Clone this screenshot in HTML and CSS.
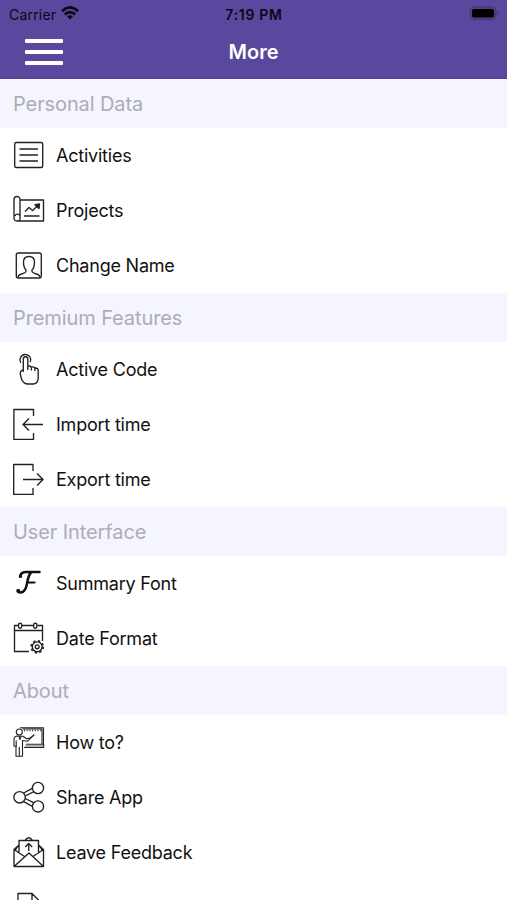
FILE: index.html
```html
<!DOCTYPE html>
<html lang="en">
<head>
<meta charset="utf-8">
<title>More</title>
<link rel="stylesheet" href="styles.css">
</head>
<body>
<header class="top">
  <div class="status">
    <div class="carrier"><span>Carrier</span>
      <svg width="18" height="14" viewBox="0 0 18 14" fill="none" stroke="#090713" stroke-width="2.7"><path d="M.9 5.2Q9-2.4 17.1 5.2M3.8 8.4Q9 3.7 14.2 8.4"/><path d="M6.1 10.6Q9 8 11.9 10.6L9 13.6Z" fill="#090713" stroke="none"/></svg>
    </div>
    <div class="time">7:19 PM</div>
    <svg class="battery" width="31" height="15" viewBox="0 0 31 15"><rect x="1" y="1" width="26" height="12.5" rx="4" fill="#50418b" stroke="#43366f"/><rect x="3" y="3" width="22" height="8.6" rx="2" fill="#000"/><path d="M29 5.500q2 1.700 0 3.500Z" fill="#392d64"/></svg>
  </div>
  <div class="nav">
    <button class="menu" aria-label="Menu"><i></i><i></i><i></i></button>
    <h1>More</h1>
  </div>
</header>
<main>
  <h2>Personal Data</h2>
  <ul>
    <li><svg viewBox="0 0 32 32"><rect x="1.700" y="3.500" width="28" height="25" rx="1.500"/><path d="M6.500 10h18.500M6.500 16h18.500M6.500 22h18.500"/></svg><span>Activities</span></li>
    <li><svg viewBox="0 0 32 32"><path d="M7 6h23.500v21H4M7 23V5.500a3 3 0 0 0-6 0V24.500a3 3 0 0 0 3 2.500h1.500Q7 27 7 24V22a2.600 2.600 0 0 0-5 0"/><path d="M12 17.500l4-4 3.500 3 6-5.500M11 22h15.500"/><path d="M22 10.700l4.500-.7-.5 4.500Z" fill="#222"/></svg><span>Projects</span></li>
    <li><svg viewBox="0 0 32 32"><rect x="3.300" y="4" width="25" height="25" rx="2"/><path d="M5 28Q5.500 25.500 10 24.500Q13.500 23.500 13 21Q10.500 18.500 10.500 13Q10.500 7.500 16 7.500T21.500 13Q21.500 18.500 19 21Q18.500 23.500 22 24.500Q26.500 25.500 27 28"/></svg><span>Change Name</span></li>
  </ul>
  <h2>Premium Features</h2>
  <ul>
    <li><svg viewBox="0 0 32 32"><path d="M7.800 9.800A5.400 5.400 0 1 1 17.300 9"/><path d="M10.300 19V6a2.200 2.200 0 0 1 4.500 0v7.500q2-1.200 3.600.700q2-1 3.500.800q3-.3 3.300 2v8Q25 30.500 20.500 31h-6Q10 30.500 8.500 26L7.300 21Q7 17.500 10.300 17M14.800 12v5M18.400 14v3.500M21.900 15v3"/></svg><span>Active Code</span></li>
    <li><svg viewBox="0 0 32 32"><path d="M20.500 8V1.500H.9v30h19.600V25M30 16.500H10M16 10.500l-6 6 6 6"/></svg><span>Import time</span></li>
    <li><svg viewBox="0 0 32 32"><path d="M20 8V1.500H.7v30H20V25M10 16.500h20M24 10.500l6 6-6 6"/></svg><span>Export time</span></li>
  </ul>
  <h2>User Interface</h2>
  <ul>
    <li><svg class="script" viewBox="0 0 32 32"><path d="M7 9.500Q8 5 13 5H26.500M18 5.500Q15.500 8 14 16.500Q12.500 25.500 7.500 25.500Q4.800 25.500 4.500 23.500" stroke-width="2.500"/><path d="M14 15.500h7.500" stroke-width="2.200"/><circle cx="5.500" cy="23.800" r="1.200" fill="#111"/><circle cx="7.700" cy="9.500" r=".8" fill="#111"/></svg><span>Summary Font</span></li>
    <li><svg viewBox="0 0 32 32"><path d="M5 3.500H1.500v26H16M9 3.500H20M24.500 3.500h5V19M1.500 8.500h28"/><rect x="5.500" y="1.200" width="3.200" height="5" rx="1.600"/><rect x="20.700" y="1.200" width="3.200" height="5" rx="1.600"/><circle cx="24.200" cy="24.800" r="4.900"/><circle cx="24.200" cy="24.800" r="1.900"/><circle cx="24.200" cy="24.800" r="6" stroke-width="1.800" stroke-dasharray="2.300 2.412"/></svg><span>Date Format</span></li>
  </ul>
  <h2>About</h2>
  <ul>
    <li><svg class="fine" viewBox="0 0 32 32"><path d="M9.500 3H29v15M7 1.800h23.500V18.300M13 18.300h17.700v3.200H11"/><path d="M11 4.500h17" stroke-dasharray="1 1.700" stroke-width="1.600"/><path d="M12 19.900h18" stroke="#aaa" stroke-width="1.800"/><path d="M4 10Q1 10.500 1 13v7l2 .5V30.300h6.500V14.500l5 .7 6.500-6.200-4 3-3.500.8L10 10.300Z" fill="#fff"/><circle cx="6.300" cy="6" r="3" fill="#fff"/><path d="M3.200 21v-6.500M6.300 30v-9M6 10.500l1 3 1-3"/></svg><span>How to?</span></li>
    <li><svg viewBox="0 0 32 32"><circle cx="6.600" cy="16.300" r="5.700"/><circle cx="25" cy="7" r="5.600"/><circle cx="25" cy="25.400" r="5.600"/><path d="M10.600 12l8.800-4.700M12.200 15l8.800-4.300M12.200 17.500l8.800 4.300M10.600 20.600l8.800 4.700"/></svg><span>Share App</span></li>
    <li><svg viewBox="0 0 32 32"><path d="M6 9L1 13.500v17h29.500v-17L25.500 9M1 13.500l10.500 7M30.500 13.500l-10.500 7M1 30.500l15-13.500 14.500 13.500M6 17V4.500H25.500V17M12 4.500q3.700-5.500 7.500 0M6 10q-3 1-3.500 5M25.500 10q3 1 3.500 5M15.700 15V7.500M12.200 11l3.500-3.500 3.500 3.500"/></svg><span>Leave Feedback</span></li>
    <li><svg viewBox="0 0 32 32"><path d="M5 2.500H19l8 8V30H5ZM19 2.500v8h8"/></svg><span>Privacy Policy</span></li>
  </ul>
</main>
</body>
</html>
```
FILE: styles.css
```css
* { box-sizing: border-box; }
body {
  margin: 0;
  height: 900px;
  overflow: hidden;
  background: #fff;
  color: #111;
  font-family: Inter, "Liberation Sans", sans-serif;
}
.top { height: 79px; background: #59489d; border-bottom: 1px solid #51408f; }
.status {
  display: grid;
  grid-template-columns: 1fr auto 1fr;
  height: 28px;
  padding: 0 7px 0 7px;
  align-items: center;
  color: #090713;
  font-size: 14px;
}
.carrier { display: flex; align-items: center; gap: 5px; padding-left: 2px; letter-spacing: .2px; }
.carrier svg { margin-top: -3px; }
.time { font-weight: 600; letter-spacing: .7px; margin-right: -1px; }
.battery { justify-self: end; margin-top: -1px; }
.nav {
  display: grid;
  grid-template-columns: 1fr auto 1fr;
  align-items: center;
  height: 48px;
  padding: 0 25px;
}
.menu {
  display: flex;
  flex-direction: column;
  gap: 7px;
  width: 38px;
  padding: 0;
  border: 0;
  background: none;
}
.menu i { height: 4px; background: #fff; border-radius: 1px; }
h1 { margin: 0; color: #fff; font-size: 20px; font-weight: 600; }
h2 {
  display: flex;
  align-items: center;
  height: 49px;
  margin: 0;
  padding: 1px 13px 0;
  background: #f5f5ff;
  color: #adadb2;
  font-size: 20px;
  font-weight: 400;
  letter-spacing: -.1px;
}
ul { margin: 0; padding: 0; list-style: none; }
li {
  display: flex;
  align-items: center;
  gap: 11px;
  height: 55px;
  padding: 0 13px 1px;
  font-size: 18px;
  letter-spacing: -.22px;
}
li svg {
  width: 32px;
  height: 32px;
  flex: none;
  fill: none;
  stroke: #222;
  stroke-width: 1.35;
  stroke-linejoin: round;
}
li svg.fine { stroke-width: 1.1; }
li svg.script { stroke: #111; stroke-linecap: round; }
```
